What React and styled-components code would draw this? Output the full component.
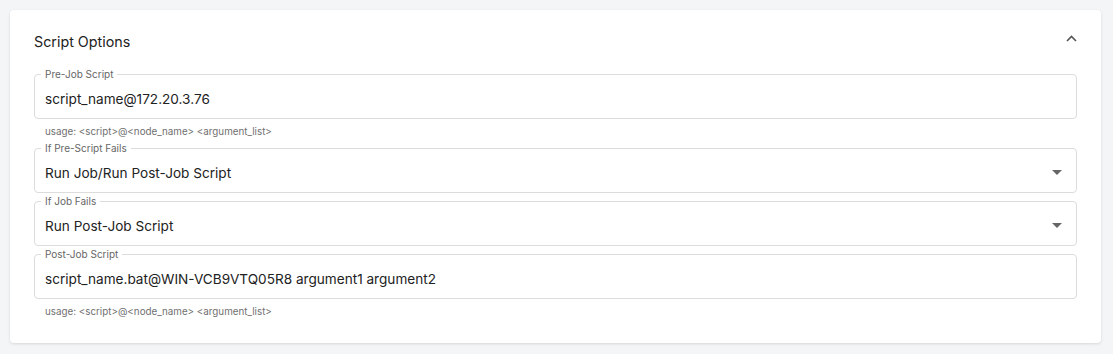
import styled, { createGlobalStyle } from "styled-components";

const GlobalStyle = createGlobalStyle`
  body {
    margin: 0;
    background: #f4f5f7;
    font-family: Inter, "Noto Sans", sans-serif;
  }
`;

const Card = styled.section`
  margin: 10px 12px 12px 10px;
  background: #fff;
  border-radius: 4px;
  box-shadow: 0 1px 3px rgba(0, 0, 0, 0.12);
  padding: 22px 24px 24px 24px;
`;

const Header = styled.div`
  display: flex;
  justify-content: space-between;
  align-items: flex-start;
  margin-bottom: 16px;
`;

const Title = styled.h2`
  margin: 0;
  font-size: 14.3px;
  font-weight: 400;
  line-height: 20px;
  color: #222;
`;

const Collapse = styled.svg`
  margin-top: 3px;
`;

const Field = styled.fieldset`
  margin: 0;
  padding: 0 14px 0 10px;
  border: 1px solid #dcdcdc;
  border-radius: 4px;
  min-width: 0;
`;

const Legend = styled.legend`
  padding: 0 4px;
  margin-left: -4px;
  font-size: 10px;
  line-height: 12px;
  color: #666;
`;

const Control = styled.div`
  height: 38px;
  display: flex;
  align-items: center;
  justify-content: space-between;
  padding-bottom: 1px;
  box-sizing: border-box;
  font-size: 13.6px;
  color: #222;
`;

const Helper = styled.div`
  margin: ${(p) => (p.last ? "6px 0 0" : "6px 0 3px")};
  padding-left: 11px;
  font-size: 9.8px;
  line-height: 14px;
  color: #6f6f6f;
`;

const Stack = styled.div`
  display: flex;
  flex-direction: column;
  gap: 2px;
`;

function Arrow() {
  return (
    <svg width="10" height="5" viewBox="0 0 10 5">
      <path d="M0 0 L10 0 L5 5 Z" fill="#666" />
    </svg>
  );
}

function Input({ label, value, select }) {
  return (
    <Field>
      <Legend>{label}</Legend>
      <Control>
        <span>{value}</span>
        {select && <Arrow />}
      </Control>
    </Field>
  );
}

export default function App() {
  return (
    <>
      <GlobalStyle />
      <Card>
        <Header>
          <Title>Script Options</Title>
          <Collapse width="11" height="7" viewBox="0 0 11 7">
            <path d="M1 6 L5.5 1.5 L10 6" fill="none" stroke="#555" strokeWidth="1.6" />
          </Collapse>
        </Header>
        <Input label="Pre-Job Script" value="script_name@172.20.3.76" />
        <Helper>usage: &lt;script&gt;@&lt;node_name&gt; &lt;argument_list&gt;</Helper>
        <Stack>
          <Input label="If Pre-Script Fails" value="Run Job/Run Post-Job Script" select />
          <Input label="If Job Fails" value="Run Post-Job Script" select />
          <Input label="Post-Job Script" value="script_name.bat@WIN-VCB9VTQ05R8 argument1 argument2" />
        </Stack>
        <Helper last>usage: &lt;script&gt;@&lt;node_name&gt; &lt;argument_list&gt;</Helper>
      </Card>
    </>
  );
}
